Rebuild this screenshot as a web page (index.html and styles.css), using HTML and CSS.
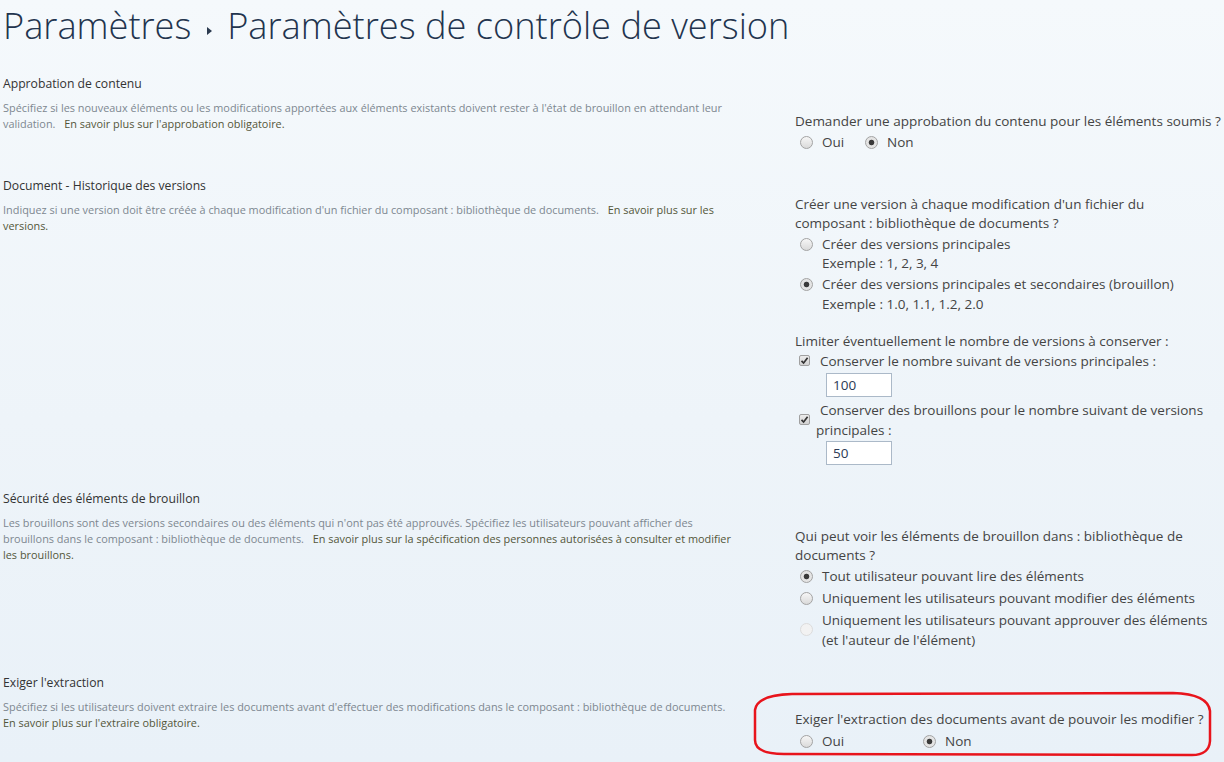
FILE: index.html
```html
<!DOCTYPE html>
<html lang="fr">
<head>
  <meta charset="UTF-8">
  <title>Paramètres de contrôle de version</title>
  <link rel="stylesheet" href="styles.css">
</head>
<body>
  <div class="page">
    <h1 class="page-title">
      <span>Paramètres</span>
      <svg class="crumb-arrow" width="7" height="10" viewBox="0 0 7 10"><polygon points="1,1 6,5 1,9" fill="#2b3a4f"/></svg>
      <span>Paramètres de contrôle de version</span>
    </h1>

    <!-- Approbation de contenu -->
    <div class="section">
      <div class="section-head">
        <h3>Approbation de contenu</h3>
        <p class="desc">Spécifiez si les nouveaux éléments ou les modifications apportées aux éléments existants doivent rester à l'état de brouillon en attendant leur<br>validation. <a class="more">En savoir plus sur l'approbation obligatoire.</a></p>
      </div>
      <div class="section-body">
        <div class="question">Demander une approbation du contenu pour les éléments soumis ?</div>
        <div class="choices inline">
          <label class="opt opt-short"><input type="radio" name="approval">Oui</label>
          <label class="opt"><input type="radio" name="approval" checked>Non</label>
        </div>
      </div>
    </div>

    <!-- Historique des versions -->
    <div class="section section-tall">
      <div class="section-head">
        <h3>Document - Historique des versions</h3>
        <p class="desc">Indiquez si une version doit être créée à chaque modification d'un fichier du composant : bibliothèque de documents. <a class="more">En savoir plus sur les<br>versions.</a></p>
      </div>
      <div class="section-body body-top">
        <div class="question">Créer une version à chaque modification d'un fichier du<br>composant : bibliothèque de documents ?</div>
        <label class="opt"><input type="radio" name="versioning">Créer des versions principales</label>
        <div class="example">Exemple : 1, 2, 3, 4</div>
        <label class="opt"><input type="radio" name="versioning" checked>Créer des versions principales et secondaires (brouillon)</label>
        <div class="example">Exemple : 1.0, 1.1, 1.2, 2.0</div>

        <div class="question limit-title">Limiter éventuellement le nombre de versions à conserver :</div>
        <div class="check-row">
          <span class="check"><svg width="9" height="9" viewBox="0 0 9 9"><path d="M1.5 4.8 L3.6 7 L7.6 1.8" fill="none" stroke="#333" stroke-width="1.7"/></svg></span>
          <span class="check-label">Conserver le nombre suivant de versions principales :</span>
        </div>
        <input class="num-input" type="text" value="100">
        <div class="check-row check-row-wrap">
          <span class="check"><svg width="9" height="9" viewBox="0 0 9 9"><path d="M1.5 4.8 L3.6 7 L7.6 1.8" fill="none" stroke="#333" stroke-width="1.7"/></svg></span>
          <span class="check-label">Conserver des brouillons pour le nombre suivant de versions<br>principales :</span>
        </div>
        <input class="num-input num-input-last" type="text" value="50">
      </div>
    </div>

    <!-- Sécurité des éléments de brouillon -->
    <div class="section">
      <div class="section-head">
        <h3>Sécurité des éléments de brouillon</h3>
        <p class="desc">Les brouillons sont des versions secondaires ou des éléments qui n'ont pas été approuvés. Spécifiez les utilisateurs pouvant afficher des<br>brouillons dans le composant : bibliothèque de documents. <a class="more">En savoir plus sur la spécification des personnes autorisées à consulter et modifier<br>les brouillons.</a></p>
      </div>
      <div class="section-body">
        <div class="question">Qui peut voir les éléments de brouillon dans : bibliothèque de<br>documents ?</div>
        <label class="opt opt-tight"><input type="radio" name="drafts" checked>Tout utilisateur pouvant lire des éléments</label>
        <label class="opt opt-tight"><input type="radio" name="drafts">Uniquement les utilisateurs pouvant modifier des éléments</label>
        <label class="opt opt-multi"><input type="radio" name="drafts" disabled><span>Uniquement les utilisateurs pouvant approuver des éléments<br>(et l'auteur de l'élément)</span></label>
      </div>
    </div>

    <!-- Exiger l'extraction -->
    <div class="section">
      <div class="section-head">
        <h3>Exiger l'extraction</h3>
        <p class="desc">Spécifiez si les utilisateurs doivent extraire les documents avant d'effectuer des modifications dans le composant : bibliothèque de documents.<br><a class="more more-start">En savoir plus sur l'extraire obligatoire.</a></p>
      </div>
      <div class="section-body body-marked">
        <svg class="mark" width="464" height="70" viewBox="0 0 464 70">
          <path d="M3 19 Q5 4 40 3 L421 2 Q456 3 458 20 L458 50 Q457 64 440 64 L32 63 Q3 63 3 49 Z" fill="none" stroke="#e8141c" stroke-width="2.5"/>
        </svg>
        <div class="question">Exiger l'extraction des documents avant de pouvoir les modifier ?</div>
        <div class="choices inline choices-last">
          <label class="opt opt-wide"><input type="radio" name="checkout">Oui</label>
          <label class="opt"><input type="radio" name="checkout" checked>Non</label>
        </div>
      </div>
    </div>
  </div>
</body>
</html>
```

FILE: styles.css
```css
html {
  height: 100%;
  overflow: hidden;
  background: linear-gradient(180deg, #f5f9fc 0%, #eef4f9 55%, #e9f1f8 100%);
}

body {
  margin: 0;
  min-height: 100%;
  font-family: 'Open Sans', sans-serif;
  color: #444;
}

.page {
  padding-left: 3px;
  padding-bottom: 12px;
}

.page-title {
  margin: 0;
  height: 75px;
  line-height: 50px;
  font-size: 36.2px;
  font-weight: 300;
  color: #22344e;
  white-space: nowrap;
}

.crumb-arrow {
  margin: 0 5px 0 5px;
  vertical-align: 3px;
}

.section {
  display: flex;
  padding-bottom: 24px;
}
.section-tall { padding-bottom: 25px; }
.section:last-child {
  padding-bottom: 0;
}

.section-head {
  width: 740px;
  flex: none;
}

.section-head h3 {
  margin: 0 0 7px;
  font-size: 12.2px;
  font-weight: 400;
  line-height: 18px;
  color: #333;
}

.desc {
  margin: 0;
  font-size: 10.9px;
  line-height: 16px;
  color: #7d8790;
  white-space: nowrap;
}

.more {
  margin-left: 6px;
  color: #535639;
}
.more-start { margin-left: 0; }

.section-body {
  margin-left: 52px;
  padding-top: 37px;
  font-size: 13.5px;
  line-height: 19px;
  white-space: nowrap;
}
.body-top { padding-top: 18px; }
.body-marked {
  position: relative;
  padding-top: 36px;
}

.question { color: #444; }

.opt {
  display: flex;
  align-items: center;
  height: 20px;
  margin-top: 1.5px;
  color: #444;
}
.opt-tight { margin-top: 2px; }
.opt-multi {
  height: auto;
  line-height: 20px;
  margin-top: 1px;
}

.choices.inline { display: flex; }
.choices-last { margin-top: 1px; }
.opt-short { width: 65px; }
.opt-wide { width: 123px; }

input[type="radio"] {
  -webkit-appearance: none;
  appearance: none;
  width: 13px;
  height: 13px;
  margin: 0 9px 0 5px;
  border: 1px solid #a3a3a3;
  border-radius: 50%;
  background: linear-gradient(180deg, #f6f6f6, #dadada);
  flex: none;
}
input[type="radio"]:checked {
  background: radial-gradient(circle, #3a3a3a 0 2.4px, #e4e4e4 3.2px);
}
input[type="radio"]:disabled {
  border-color: #dcdcdc;
  background: #f2f2f2;
}

.example {
  padding-left: 27px;
  color: #444;
}

.limit-title { margin-top: 18px; }

.check-row {
  display: flex;
  align-items: center;
  line-height: 20px;
  margin-top: 0;
}
.check-row-wrap { margin-top: 3px; }

.check {
  flex: none;
  width: 11px;
  height: 11px;
  margin: 0 6px 0 4px;
  border: 1px solid #a0a0a0;
  border-radius: 2px;
  background: linear-gradient(180deg, #ececec, #d2d2d2);
  display: flex;
  align-items: center;
  justify-content: center;
  box-sizing: border-box;
}

.check-label {
  text-indent: 4px;
}

.num-input {
  display: block;
  margin: 2px 0 0 31px;
  width: 66px;
  height: 24px;
  box-sizing: border-box;
  border: 1px solid #abb9c8;
  padding: 0 6px;
  font-family: 'Open Sans', sans-serif;
  font-size: 13.5px;
  color: #2b3a55;
  background: #fff;
}
.num-input-last { margin-top: 1px; }

.mark {
  position: absolute;
  left: -43px;
  top: 17px;
  pointer-events: none;
}
```
